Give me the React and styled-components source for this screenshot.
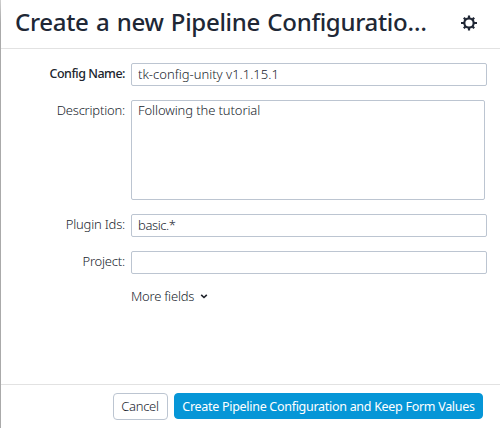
import React from "react";
import styled, { createGlobalStyle } from "styled-components";

const GlobalStyle = createGlobalStyle`
  * { box-sizing: border-box; }
  body { margin: 0; background: #fff; }
  button, input, textarea { font: inherit; letter-spacing: inherit; }
`;

const Dialog = styled.form`
  display: flex;
  flex-direction: column;
  width: 500px;
  height: 428px;
  overflow: hidden;
  background: #fff;
  border-left: 1px solid;
  border-image: linear-gradient(#d0d0d0, #aaa 24px) 1;
  color: #20252e;
  font-family: "Noto Sans", "Open Sans", sans-serif;
  font-size: 13px;
  font-weight: 300;
`;

const Header = styled.header`
  display: flex;
  align-items: flex-start;
  justify-content: space-between;
  flex: none;
  height: 49px;
  padding: 0 23px 0 14px;
  border-bottom: 1px solid #e2e2e2;
`;

const Title = styled.h1`
  margin: 5px 0 0;
  color: #202735;
  font-size: 24px;
  font-weight: 500;
  line-height: 33px;
  letter-spacing: -0.3px;
  word-spacing: 1.4px;
  white-space: nowrap;
`;

const SettingsButton = styled.button`
  display: flex;
  margin: 15px 0 0;
  padding: 0;
  border: 0;
  background: none;
  color: #202735;
`;

const Fields = styled.div`
  display: flex;
  flex-direction: column;
  flex: 1;
  gap: 14px;
  padding: 14px 13px 0 0;
`;

const FieldRow = styled.div`
  display: grid;
  grid-template-columns: 124px 1fr;
  column-gap: 6px;
`;

const Label = styled.label`
  height: 21px;
  line-height: 21px;
  text-align: right;
  white-space: nowrap;
  color: #20252e;
  font-size: ${(p) => (p.$required ? "12.5px" : "13px")};
  font-weight: ${(p) => (p.$required ? 500 : 300)};
  letter-spacing: ${(p) => p.$tracking || "-0.2px"};
`;

const TextInput = styled.input`
  width: 100%;
  height: 23px;
  padding: 0 6px 1px;
  border: 1px solid #bcc5d1;
  border-radius: 2px;
  outline: 0;
  background: #fff;
  color: #20252e;
  letter-spacing: ${(p) => p.$tracking || "0"};
`;

const TextArea = styled.textarea`
  display: block;
  width: calc(100% - 2px);
  height: 100px;
  padding: 0 6px;
  border: 1px solid #bcc5d1;
  border-radius: 2px;
  outline: 0;
  resize: none;
  background: #fff;
  color: #20252e;
  line-height: 18px;
  letter-spacing: -0.1px;
`;

const MoreFields = styled.button`
  display: flex;
  align-items: center;
  grid-column: 2;
  gap: 6px;
  height: 16px;
  padding: 0;
  border: 0;
  background: none;
  color: #20252e;
  letter-spacing: -0.22px;
`;

const Footer = styled.footer`
  display: flex;
  align-items: flex-start;
  justify-content: flex-end;
  flex: none;
  gap: 6px;
  height: 44px;
  padding: 8px 17px 0 0;
  border-top: 1px solid #e2e2e2;
`;

const Button = styled.button`
  display: flex;
  align-items: center;
  justify-content: center;
  width: 55px;
  height: 27px;
  padding: 0 1px 2px 0;
  border: 1px solid #bcc5d1;
  border-radius: 4px;
  background: #fff;
  color: #20252e;
  letter-spacing: -0.3px;
  white-space: nowrap;
`;

const PrimaryButton = styled(Button)`
  width: 309px;
  height: 26px;
  padding: 0;
  border-color: #0696d7;
  background: #0696d7;
  color: #fff;
  font-size: 12.5px;
  font-weight: 400;
  letter-spacing: -0.29px;
`;

const GearIcon = () => (
  <svg width="16" height="16" viewBox="0 0 16 16" fill="none" stroke="currentColor">
    <circle cx="8" cy="8" r="4.7" strokeWidth="2.2" />
    <path
      d="M8 .6v2.6M8 12.8v2.6M0 8h3M13 8h3M2.8 2.8l1.6 1.6M11.6 11.6l1.6 1.6M13.2 2.8l-1.6 1.6M4.4 11.6l-1.6 1.6"
      strokeWidth="2.2"
    />
  </svg>
);

const ChevronIcon = () => (
  <svg width="8" height="6" viewBox="0 0 8 6" fill="none" stroke="#20242c" strokeWidth="1.6">
    <path d="M1.2 1.8 4 4.5l2.8-2.7" />
  </svg>
);

export default function App() {
  return (
    <>
      <GlobalStyle />
      <Dialog>
        <Header>
          <Title>Create a new Pipeline Configuratio…</Title>
          <SettingsButton type="button" aria-label="Settings">
            <GearIcon />
          </SettingsButton>
        </Header>
        <Fields>
          <FieldRow>
            <Label $required $tracking="-0.5px" htmlFor="name">Config Name:</Label>
            <TextInput id="name" defaultValue="tk-config-unity v1.1.15.1" />
          </FieldRow>
          <FieldRow>
            <Label htmlFor="description">Description:</Label>
            <TextArea id="description" spellCheck={false} defaultValue="Following the tutorial" />
          </FieldRow>
          <FieldRow>
            <Label htmlFor="plugins">Plugin Ids:</Label>
            <TextInput id="plugins" $tracking="-0.4px" defaultValue="basic.*" />
          </FieldRow>
          <FieldRow>
            <Label htmlFor="project">Project:</Label>
            <TextInput id="project" />
          </FieldRow>
          <FieldRow>
            <MoreFields type="button">
              More fields
              <ChevronIcon />
            </MoreFields>
          </FieldRow>
        </Fields>
        <Footer>
          <Button type="button">Cancel</Button>
          <PrimaryButton type="button">
            Create Pipeline Configuration and Keep Form Values
          </PrimaryButton>
        </Footer>
      </Dialog>
    </>
  );
}
